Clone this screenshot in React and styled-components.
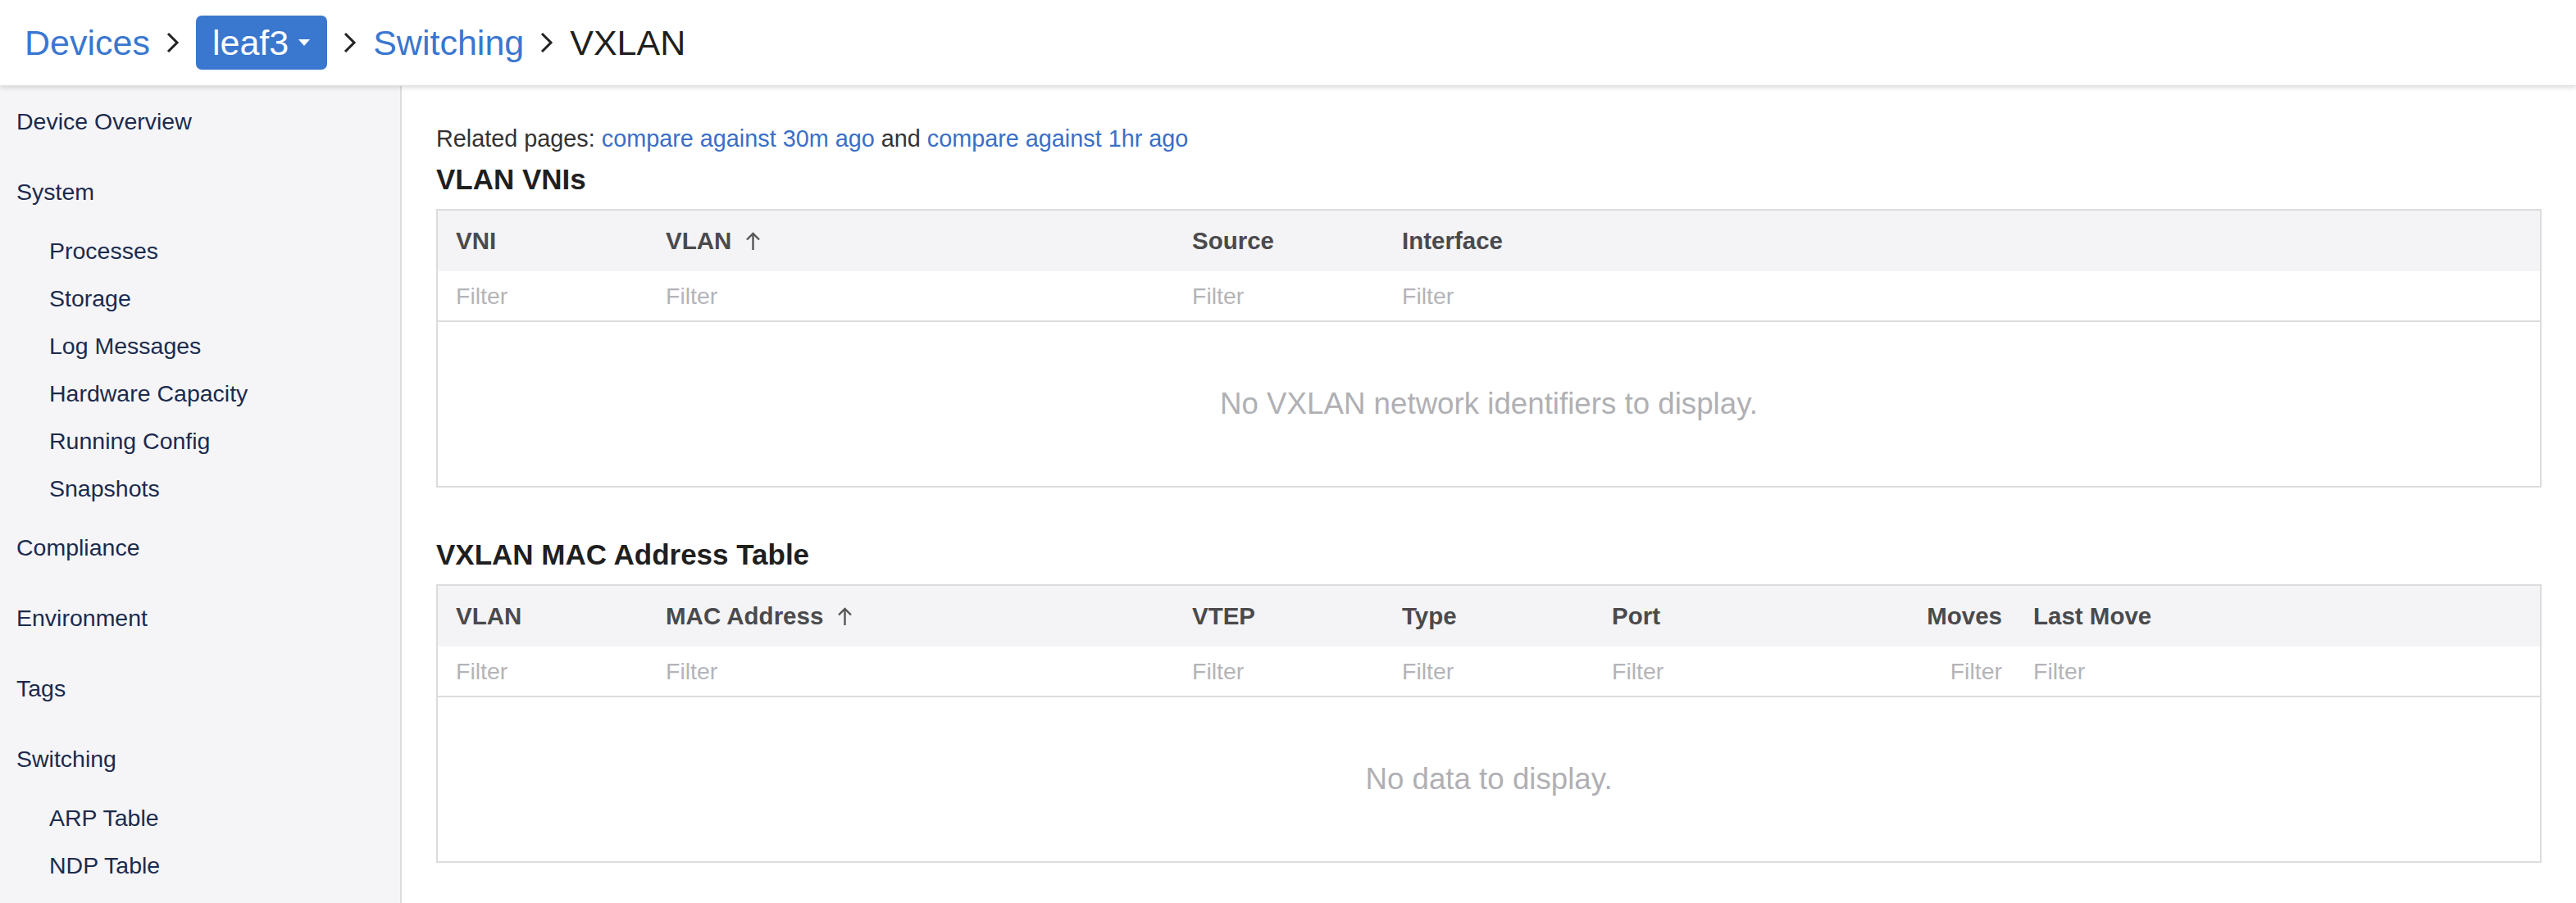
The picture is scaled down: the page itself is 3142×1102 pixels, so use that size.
import React from 'react';
import styled, { createGlobalStyle } from 'styled-components';

const GlobalStyle = createGlobalStyle`
  html, body {
    margin: 0;
    padding: 0;
    background: #fff;
    font-family: "Liberation Sans", Arial, sans-serif;
  }
`

const Page = styled.div`
  display: flex;
  flex-direction: column;
  height: 1102px;
  overflow: hidden;
`

const Header = styled.header`
  height: 104px;
  flex-shrink: 0;
  display: flex;
  align-items: center;
  padding-left: 30px;
  gap: 20px;
  background: #fff;
  box-shadow: 0 2px 6px rgba(0, 0, 0, 0.14);
  border-bottom: 1px solid #e2e2e2;
  position: relative;
  z-index: 2;
  font-size: 43px;
`

const Crumb = styled.span`
  color: ${props => props.current ? '#1f1f1f' : '#3a77cf'};
  line-height: 1;
`

const DeviceButton = styled.div`
  display: flex;
  align-items: center;
  gap: 12px;
  height: 66px;
  padding: 0 21px 0 20px;
  background: #3a77cf;
  color: #fff;
  border-radius: 7px;
  font-size: 43px;
`

const Body = styled.div`
  display: flex;
  flex: 1;
  min-height: 0;
`

const Sidebar = styled.nav`
  width: 488px;
  flex-shrink: 0;
  background: #f5f5f8;
  border-right: 2px solid #dcdcdf;
  color: #1c2b4d;
  font-size: 28.5px;
  overflow: hidden;
`

const NavItem = styled.div`
  height: ${props => props.sub ? 58 : 86}px;
  display: flex;
  align-items: center;
  padding-left: ${props => props.sub ? 60 : 20}px;
`

const Main = styled.main`
  flex: 1;
  padding: 0 42px;
  display: flex;
  flex-direction: column;
`

const Related = styled.div`
  margin-top: 46px;
  font-size: 28.8px;
  color: #333;
  line-height: 36px;
`

const Link = styled.a`
  color: #3a6fc6;
  text-decoration: none;
`

const SectionTitle = styled.h2`
  margin: ${props => props.first ? '14px' : '64px'} 0 18px 0;
  font-size: 35px;
  font-weight: bold;
  color: #1f1f1f;
  line-height: 36px;
`

const Table = styled.div`
  border: 2px solid #dcdcdc;
  display: flex;
  flex-direction: column;
`

const Row = styled.div`
  display: grid;
  grid-template-columns: ${props => props.cols};
  align-items: center;
`

const HeadRow = styled(Row)`
  height: 74px;
  background: #f4f4f6;
`

const FilterRow = styled(Row)`
  height: 60px;
  background: #fff;
  border-bottom: 2px solid #dcdcdc;
`

const HeadCell = styled.div`
  padding: 0 ${props => props.right ? 16 : 22}px 0 22px;
  display: flex;
  align-items: center;
  justify-content: ${props => props.right ? 'flex-end' : 'flex-start'};
  gap: 18px;
  font-size: 29.5px;
  font-weight: bold;
  color: #4a4a4d;
`

const FilterCell = styled.div`
  padding: 0 ${props => props.right ? 16 : 22}px 0 22px;
  text-align: ${props => props.right ? 'right' : 'left'};
  font-size: 28.5px;
  color: #b4b4b8;
`

const Empty = styled.div`
  height: 200px;
  display: flex;
  align-items: center;
  justify-content: center;
  font-size: 36.7px;
  color: #b0b0b4;
`

const Chevron = () => (
  <svg width="16" height="26" viewBox="0 0 16 26">
    <polyline points="2,2 13,13 2,24" fill="none" stroke="#222" strokeWidth="3" />
  </svg>
)

const Caret = () => (
  <svg width="14" height="8" viewBox="0 0 14 8">
    <polygon points="0,0 14,0 7,8" fill="#fff" />
  </svg>
)

const SortArrow = () => (
  <svg width="17" height="22" viewBox="0 0 17 22">
    <line x1="8.5" y1="2" x2="8.5" y2="22" stroke="#555" strokeWidth="2.4" />
    <polyline points="1,9.5 8.5,2 16,9.5" fill="none" stroke="#555" strokeWidth="2.4" />
  </svg>
)

const nav = [
  { label: 'Device Overview' },
  { label: 'System' },
  { label: 'Processes', sub: true },
  { label: 'Storage', sub: true },
  { label: 'Log Messages', sub: true },
  { label: 'Hardware Capacity', sub: true },
  { label: 'Running Config', sub: true },
  { label: 'Snapshots', sub: true },
  { label: 'Compliance' },
  { label: 'Environment' },
  { label: 'Tags' },
  { label: 'Switching' },
  { label: 'ARP Table', sub: true },
  { label: 'NDP Table', sub: true },
]

const vniCols = '256px 642px 256px 1fr';
const vniHead = [
  { label: 'VNI' },
  { label: 'VLAN', sorted: true },
  { label: 'Source' },
  { label: 'Interface' },
]

const macCols = '256px 642px 256px 256px 258px 256px 1fr';
const macHead = [
  { label: 'VLAN' },
  { label: 'MAC Address', sorted: true },
  { label: 'VTEP' },
  { label: 'Type' },
  { label: 'Port' },
  { label: 'Moves', right: true },
  { label: 'Last Move' },
]

const DataTable = ({ cols, head, empty }) => (
  <Table>
    <HeadRow cols={cols}>
      {head.map(h => (
        <HeadCell key={h.label} right={h.right}>
          {h.label}
          {h.sorted && <SortArrow />}
        </HeadCell>
      ))}
    </HeadRow>
    <FilterRow cols={cols}>
      {head.map(h => (
        <FilterCell key={h.label} right={h.right}>Filter</FilterCell>
      ))}
    </FilterRow>
    <Empty>{empty}</Empty>
  </Table>
)

const App = () => (
  <Page>
    <GlobalStyle />
    <Header>
      <Crumb>Devices</Crumb>
      <Chevron />
      <DeviceButton>
        leaf3
        <Caret />
      </DeviceButton>
      <Chevron />
      <Crumb>Switching</Crumb>
      <Chevron />
      <Crumb current>VXLAN</Crumb>
    </Header>
    <Body>
      <Sidebar>
        {nav.map(n => (
          <NavItem key={n.label} sub={n.sub}>{n.label}</NavItem>
        ))}
      </Sidebar>
      <Main>
        <Related>
          Related pages: <Link>compare against 30m ago</Link> and <Link>compare against 1hr ago</Link>
        </Related>
        <SectionTitle first>VLAN VNIs</SectionTitle>
        <DataTable cols={vniCols} head={vniHead} empty="No VXLAN network identifiers to display." />
        <SectionTitle>VXLAN MAC Address Table</SectionTitle>
        <DataTable cols={macCols} head={macHead} empty="No data to display." />
      </Main>
    </Body>
  </Page>
)

export default App;
